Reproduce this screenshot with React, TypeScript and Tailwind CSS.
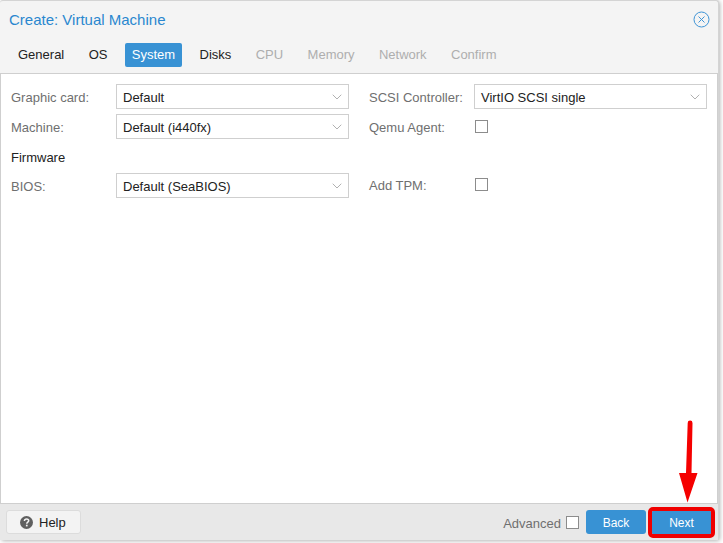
import { ChevronDown } from "lucide-react";

const STEPS = [
  ["General", "text-[#222]"],
  ["OS", "text-[#222]"],
  ["System", "bg-[#3892d4] text-white rounded-[2px]"],
  ["Disks", "text-[#222]"],
  ["CPU", "text-[#aeaeae]"],
  ["Memory", "text-[#aeaeae]"],
  ["Network", "text-[#aeaeae]"],
  ["Confirm", "text-[#aeaeae]"],
] as const;

function Select({ value, width }: { value: string; width: string }) {
  return (
    <div className={`flex h-[25px] items-center justify-between border border-[#cfcfcf] bg-white pl-[6px] pr-[3px] text-[13px] text-[#222] ${width}`}>
      <span className="pt-[2px]">{value}</span>
      <ChevronDown size={16} strokeWidth={1} className="text-[#8a8a8a]" />
    </div>
  );
}

function Label({ children, width, className = "pt-[2px]" }: { children: string; width: string; className?: string }) {
  return <span className={`shrink-0 text-[13px] text-[#6f6f6f] ${width} ${className}`}>{children}</span>;
}

export default function App() {
  return (
    <div className="h-[543px] w-[723px] overflow-hidden bg-white pr-[4px] pb-[3px] font-['Liberation_Sans',Arial,sans-serif]">
      <div className="flex h-full flex-col rounded-[3px] border-t border-r border-[#d4d4d4] bg-[#f4f4f4] shadow-[1px_1px_4px_rgba(0,0,0,0.3)]">
        <div className="flex h-[36px] items-center justify-between pl-[9px] pr-[8px] pt-[2px]">
          <span className="text-[15px] text-[#2a87cf]">Create: Virtual Machine</span>
          <svg width="17" height="17" viewBox="0 0 17 17" fill="none" stroke="#3f94d6" strokeWidth="1" className="mb-[2px]">
            <circle cx="8.5" cy="8.5" r="7.5" />
            <path d="M5.5 5.5l6 6M11.5 5.5l-6 6" />
          </svg>
        </div>
        <div className="flex h-[36px] items-start gap-[10.4px] pl-[11px] pt-[6px]">
          {STEPS.map(([name, cls]) => (
            <span key={name} className={`flex h-[24px] items-center px-[7px] text-[13px] ${cls}`}>
              {name}
            </span>
          ))}
        </div>
        <div className="flex-1 border border-[#cfcfcf] bg-white pt-[10px]">
          <div className="flex">
            <div className="flex w-[368px] shrink-0 flex-col gap-[5px] pl-[10px]">
              <div className="flex items-center">
                <Label width="w-[105px]">Graphic card:</Label>
                <Select value="Default" width="w-[233px]" />
              </div>
              <div className="flex items-center">
                <Label width="w-[105px]">Machine:</Label>
                <Select value="Default (i440fx)" width="w-[233px]" />
              </div>
              <div className="flex h-[24px] items-center pt-[4px] text-[13px] text-[#222]">Firmware</div>
              <div className="flex items-center">
                <Label width="w-[105px]">BIOS:</Label>
                <Select value="Default (SeaBIOS)" width="w-[233px]" />
              </div>
            </div>
            <div className="flex flex-col gap-[5px]">
              <div className="flex items-center">
                <Label width="w-[105px]">SCSI Controller:</Label>
                <Select value="VirtIO SCSI single" width="w-[233px]" />
              </div>
              <div className="flex h-[25px] items-center">
                <Label width="w-[105px]">Qemu Agent:</Label>
                <div className="ml-px h-[13px] w-[13px] border border-[#8c8c8c] bg-white" />
              </div>
              <div className="h-[24px]" />
              <div className="flex h-[25px] items-center">
                <Label width="w-[105px]" className="">Add TPM:</Label>
                <div className="mb-[2px] ml-px h-[13px] w-[13px] border border-[#8c8c8c] bg-white" />
              </div>
            </div>
          </div>
        </div>
        <div className="flex h-[36px] items-center justify-between bg-[#e8e8e8] pl-[6px] pr-[7px]">
          <div className="flex h-[24px] w-[75px] items-center gap-[6px] rounded-[3px] border border-[#dcdcdc] bg-[#f3f3f3] pl-[13px] text-[13px] text-[#222]">
            <svg width="13" height="13" viewBox="0 0 13 13">
              <circle cx="6.5" cy="6.5" r="6.5" fill="#5f5f5f" />
              <path d="M4.4 5C4.5 3.7 5.4 3 6.6 3C7.8 3 8.7 3.7 8.7 4.8C8.7 6.2 6.8 6.2 6.8 7.7" fill="none" stroke="#f3f3f3" strokeWidth="1.5" />
              <rect x="5.9" y="8.7" width="1.7" height="1.7" fill="#f3f3f3" />
            </svg>
            <span className="pt-px">Help</span>
          </div>
          <div className="flex items-center">
            <span className="pt-[3px] text-[13px] text-[#6f6f6f]">Advanced</span>
            <div className="ml-[5px] mr-[7px] mt-px h-[13px] w-[13px] border border-[#8c8c8c] bg-white" />
            <div className="mr-[6px] flex h-[24px] w-[60px] items-center justify-center rounded-[3px] bg-[#3892d4] pt-px text-[12px] text-white">Back</div>
            <div className="relative flex h-[23px] w-[59px] items-center justify-center rounded-[1px] bg-[#3892d4] pt-px text-[12px] text-white outline-[4px] outline-[#f00000]">
              Next
              <svg width="20" height="84" viewBox="0 0 20 84" className="absolute -top-[91px] left-[27px]">
                <path d="M8.7 3 A2.4 2.4 0 0 1 13.5 3 L12.5 53 L18.5 53 L8.5 82.5 L0 53 L7 53 Z" fill="#f50000" />
              </svg>
            </div>
          </div>
        </div>
      </div>
    </div>
  );
}
